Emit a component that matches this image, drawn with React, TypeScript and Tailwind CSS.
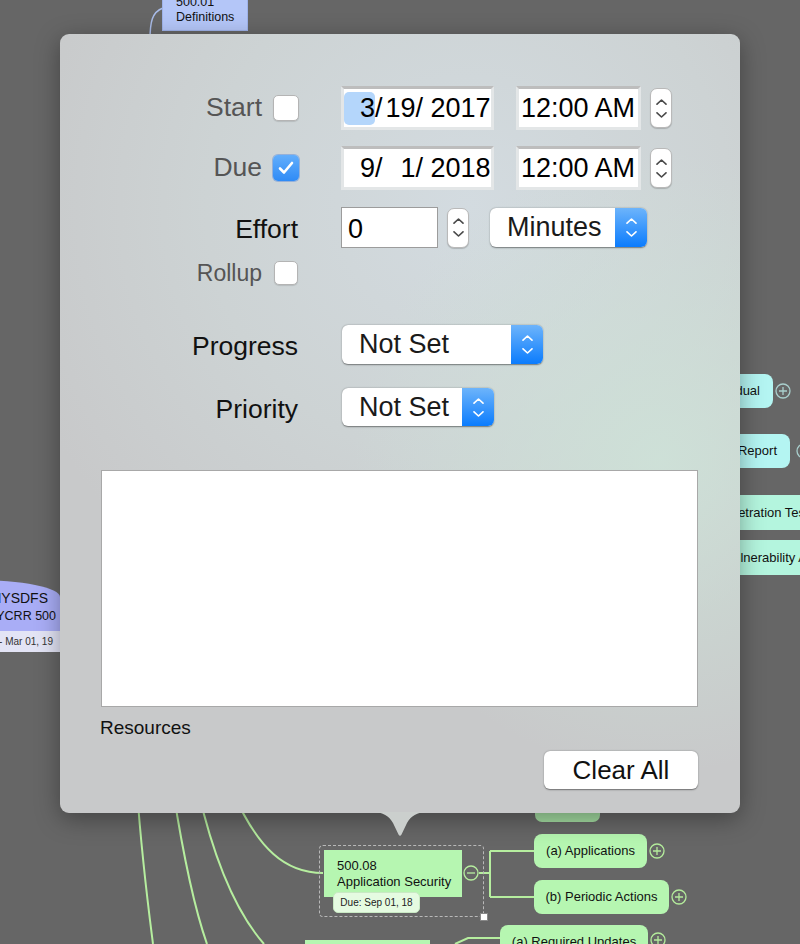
import React from 'react';

const UpDown = ({ color = '#4a4a4a' }: { color?: string }) => (
    <div className="flex flex-col items-center gap-[7px]">
        <svg width="11" height="6" viewBox="0 0 11 6" fill="none">
            <path d="M1 5.2 L5.5 1 L10 5.2" stroke={color} strokeWidth="1.6" strokeLinecap="round" strokeLinejoin="round" />
        </svg>
        <svg width="11" height="6" viewBox="0 0 11 6" fill="none">
            <path d="M1 0.8 L5.5 5 L10 0.8" stroke={color} strokeWidth="1.6" strokeLinecap="round" strokeLinejoin="round" />
        </svg>
    </div>
);

const Stepper = () => (
    <div className="w-[22px] h-[40px] rounded-[7px] bg-white border border-[#b9b9b9] shadow-[0_1px_1px_rgba(0,0,0,0.18)] flex items-center justify-center">
        <UpDown />
    </div>
);

const Checkbox = ({ checked, size = 26 }: { checked?: boolean; size?: number }) =>
    checked ? (
        <div
            className="rounded-[5px] bg-[linear-gradient(#62aefc,#2f8bf6)] shadow-[0_0_0_1px_rgba(40,110,220,0.35)] flex items-center justify-center"
            style={{ width: size, height: size }}
        >
            <svg width="16" height="14" viewBox="0 0 16 14" fill="none">
                <path d="M2 7.5 L6 11.5 L14 2" stroke="white" strokeWidth="2.6" strokeLinecap="round" strokeLinejoin="round" />
            </svg>
        </div>
    ) : (
        <div
            className="rounded-[5px] bg-white border border-[#b4b4b4] shadow-[0_1px_1px_rgba(0,0,0,0.12)]"
            style={{ width: size, height: size }}
        />
    );

const PopUp = ({ label, width, height }: { label: string; width: number; height: number }) => (
    <div
        className="flex rounded-[6px] bg-white shadow-[0_0.5px_1.5px_rgba(0,0,0,0.45)]"
        style={{ width, height }}
    >
        <div className="flex-1 flex items-center pl-[17px] text-[27px] text-[#1a1a1a]">{label}</div>
        <div className="w-[32px] h-full rounded-r-[6px] bg-[linear-gradient(#6db4fb,#0b7cfd)] flex items-center justify-center">
            <UpDown color="#ffffff" />
        </div>
    </div>
);

const DateField = ({ month, day, year, selected }: { month: string; day: string; year: string; selected?: boolean }) => (
    <div className="w-[153px] h-[44px] bg-white border-[3px] border-[#e3e6e7] border-t-[#bdbdbd] flex items-center text-[27px] text-black">
        <span className={`inline-block w-[31px] h-[33px] leading-[33px] text-right rounded-[5px] ${selected ? 'bg-[#b4d6fb]' : ''}`}>{month}</span>
        <span>/</span>
        <span className="inline-block w-[33px] text-right">{day}</span>
        <span>/ {year}</span>
    </div>
);

const TimeField = () => (
    <div className="w-[125px] h-[44px] bg-white border-[3px] border-[#e3e6e7] border-t-[#bdbdbd] flex items-center pl-[2px] text-[27px] text-black">
        12:00 AM
    </div>
);

const Plus = ({ x, y, c = '#b4ec9c' }: { x: number; y: number; c?: string }) => (
    <g stroke={c} strokeWidth="1.3" fill="none">
        <circle cx={x} cy={y} r="7" />
        <path d={`M${x - 4} ${y} H${x + 4} M${x} ${y - 4} V${y + 4}`} />
    </g>
);

export default function App() {
    return (
        <div className="relative w-[800px] h-[944px] overflow-hidden bg-[#666666] font-['Liberation_Sans',Arial,sans-serif]">
            {/* mind map connectors */}
            <svg className="absolute inset-0" width="800" height="944">
                <path d="M150 40 C150 22 152 12 163 8" stroke="#a9bce9" strokeWidth="1.5" fill="none" />
                <g stroke="#b6ee9f" strokeWidth="2" fill="none">
                    <path d="M137 790 C142 860 148 905 153 944" />
                    <path d="M173 790 C184 860 195 910 207 944" />
                    <path d="M198 790 C214 860 236 912 264 944" />
                    <path d="M232 790 C258 850 286 873 323 873" />
                    <path d="M479 873 H490 M490 851 V897 M490 851 H534 M490 897 H534" />
                    <path d="M455 944 L468 938 H500" />
                </g>
                <g stroke="#b6ee9f" strokeWidth="1.3" fill="none">
                    <circle cx="471" cy="873" r="7" />
                    <path d="M467 873 H475" />
                </g>
                <Plus x={657} y={851} />
                <Plus x={679} y={897} />
                <Plus x={658} y={940} />
                <Plus x={783} y={391} c="#a9cfcd" />
                <Plus x={804} y={451} c="#a9cfcd" />
            </svg>

            {/* top node */}
            <div className="absolute left-[162px] top-[-7px] w-[86px] h-[38px] bg-[#b4c6f8] border border-[#9fb3ea] px-[13px] pt-[1px] text-[12.5px] leading-[15px] text-[#111]">
                <div>500.01</div>
                <div>Definitions</div>
            </div>

            {/* left root node */}
            <div className="absolute left-[-110px] top-[580px] w-[170px]">
                <div className="h-[51px] bg-[#a9adf6] rounded-t-[110px_22px] pt-[9px] text-right leading-[18px] text-[#111] whitespace-nowrap">
                    <div className="pr-[12px] text-[14px]">NYSDFS</div>
                    <div className="pr-[4px] text-[12.5px]">NYCRR 500</div>
                </div>
                <div className="h-[21px] bg-[#e3e4f5] pr-[7px] text-right text-[10px] leading-[21px] text-[#333]">Mar 01, 17 - Mar 01, 19</div>
            </div>

            {/* right nodes */}
            <div className="absolute left-[640px] top-[374px] w-[133px] h-[34px] rounded-[8px] bg-[#b4f5f2] pr-[13px] text-right text-[13px] leading-[34px] text-[#111]">Individual</div>
            <div className="absolute left-[640px] top-[434px] w-[150px] h-[34px] rounded-[8px] bg-[#b4f5f2] pr-[13px] text-right text-[13px] leading-[34px] text-[#111]">Report</div>
            <div className="absolute left-[690px] top-[495px] w-[160px] h-[35px] rounded-[6px] bg-[#b4f5de] pl-[25px] text-[13px] leading-[35px] text-[#111] whitespace-nowrap">Penetration Testing</div>
            <div className="absolute left-[690px] top-[540px] w-[200px] h-[35px] rounded-[6px] bg-[#b4f5de] pl-[35px] text-[13px] leading-[35px] text-[#111] whitespace-nowrap">Vulnerability Assessment</div>

            {/* bottom nodes */}
            <div className="absolute left-[535px] top-[790px] w-[65px] h-[32px] rounded-[7px] bg-[#a3dca1]" />
            <div className="absolute left-[319px] top-[845px] w-[165px] h-[72px] border border-dashed border-[#b9b9b9] rounded-[4px]" />
            <div className="absolute left-[480px] top-[913px] w-[8px] h-[8px] bg-white border border-[#888]" />
            <div className="absolute left-[324px] top-[850px] w-[138px] h-[47px] bg-[#b6f6b1] pl-[13px] pt-[8px] text-[13px] leading-[16px] text-[#111]">
                <div>500.08</div>
                <div>Application Security</div>
            </div>
            <div className="absolute left-[333px] top-[892px] w-[87px] h-[21px] rounded-[5px] bg-[#e5fbe1] border border-[#c9e9c4] text-center text-[10px] leading-[19px] text-[#222]">Due: Sep 01, 18</div>
            <div className="absolute left-[534px] top-[834px] w-[113px] h-[34px] rounded-[8px] bg-[#b6f6b1] text-center text-[13px] leading-[34px] text-[#111]">(a) Applications</div>
            <div className="absolute left-[534px] top-[880px] w-[135px] h-[34px] rounded-[8px] bg-[#b6f6b1] text-center text-[13px] leading-[34px] text-[#111]">(b) Periodic Actions</div>
            <div className="absolute left-[305px] top-[940px] w-[125px] h-[20px] bg-[#b6f6b1]" />
            <div className="absolute left-[500px] top-[925px] w-[148px] h-[34px] rounded-[8px] bg-[#b6f6b1] text-center text-[13px] leading-[34px] text-[#111]">(a) Required Updates</div>

            {/* popover */}
            <div className="absolute left-[60px] top-[34px] w-[680px] h-[779px] rounded-[9px] shadow-[0_6px_24px_rgba(0,0,0,0.35)] bg-[image:radial-gradient(ellipse_45%_40%_at_88%_55%,rgba(206,226,216,0.9),transparent),radial-gradient(ellipse_70%_60%_at_60%_22%,#d3dbe0,#cdd3d4_55%,#c8c9ca_100%)]">
                <div className="flex flex-col h-full text-[26.5px]">
                    <div className="mt-[52px] h-[44px] flex items-center">
                        <div className="w-[239px] flex justify-end items-center gap-[11px]">
                            <span className="text-[#555555]">Start</span>
                            <Checkbox />
                        </div>
                        <div className="ml-[42px]"><DateField month="3" day="19" year="2017" selected /></div>
                        <div className="ml-[22px]"><TimeField /></div>
                        <div className="ml-[9px]"><Stepper /></div>
                    </div>
                    <div className="mt-[16px] h-[44px] flex items-center">
                        <div className="w-[239px] flex justify-end items-center gap-[11px]">
                            <span className="text-[#555555]">Due</span>
                            <Checkbox checked />
                        </div>
                        <div className="ml-[42px]"><DateField month="9" day="1" year="2018" /></div>
                        <div className="ml-[22px]"><TimeField /></div>
                        <div className="ml-[9px]"><Stepper /></div>
                    </div>
                    <div className="mt-[17px] h-[41px] flex items-center">
                        <div className="w-[238px] text-right pt-[4px] text-[#111]">Effort</div>
                        <div className="ml-[43px] w-[97px] h-[41px] bg-white border border-[#9c9c9c] pl-[6px] flex items-center text-[27px] text-black pt-[4px]">0</div>
                        <div className="ml-[9px]"><Stepper /></div>
                        <div className="ml-[21px]"><PopUp label="Minutes" width={157} height={39} /></div>
                    </div>
                    <div className="mt-[13px] h-[24px] flex items-center">
                        <div className="w-[238px] flex justify-end items-center gap-[12px]">
                            <span className="text-[#555555] text-[23px]">Rollup</span>
                            <Checkbox size={24} />
                        </div>
                    </div>
                    <div className="mt-[40px] h-[39px] flex items-center">
                        <div className="w-[238px] text-right pt-[5px] text-[#111]">Progress</div>
                        <div className="ml-[44px]"><PopUp label="Not Set" width={201} height={39} /></div>
                    </div>
                    <div className="mt-[24px] h-[38px] flex items-center">
                        <div className="w-[238px] text-right pt-[5px] text-[#111]">Priority</div>
                        <div className="ml-[44px]"><PopUp label="Not Set" width={152} height={38} /></div>
                    </div>
                    <div className="mt-[44px] ml-[41px] w-[597px] h-[237px] bg-white border border-[#a8a8a8]" />
                    <div className="mt-[10px] ml-[40px] text-[19px] leading-[22px] text-[#111]">Resources</div>
                    <div className="mt-[12px] mr-[42px] self-end w-[154px] h-[38px] rounded-[6px] bg-white shadow-[0_0.5px_1.5px_rgba(0,0,0,0.45)] flex items-center justify-center text-[26px] text-[#111]">
                        Clear All
                    </div>
                </div>
                <svg className="absolute left-[313px] top-[778px]" width="54" height="27" viewBox="0 0 54 27">
                    <path d="M0 0 C10 0 16 4 20 11 L25.5 22.5 Q27 25 28.5 22.5 L34 11 C38 4 44 0 54 0 Z" fill="#cbcfcd" />
                </svg>
            </div>
        </div>
    );
}
